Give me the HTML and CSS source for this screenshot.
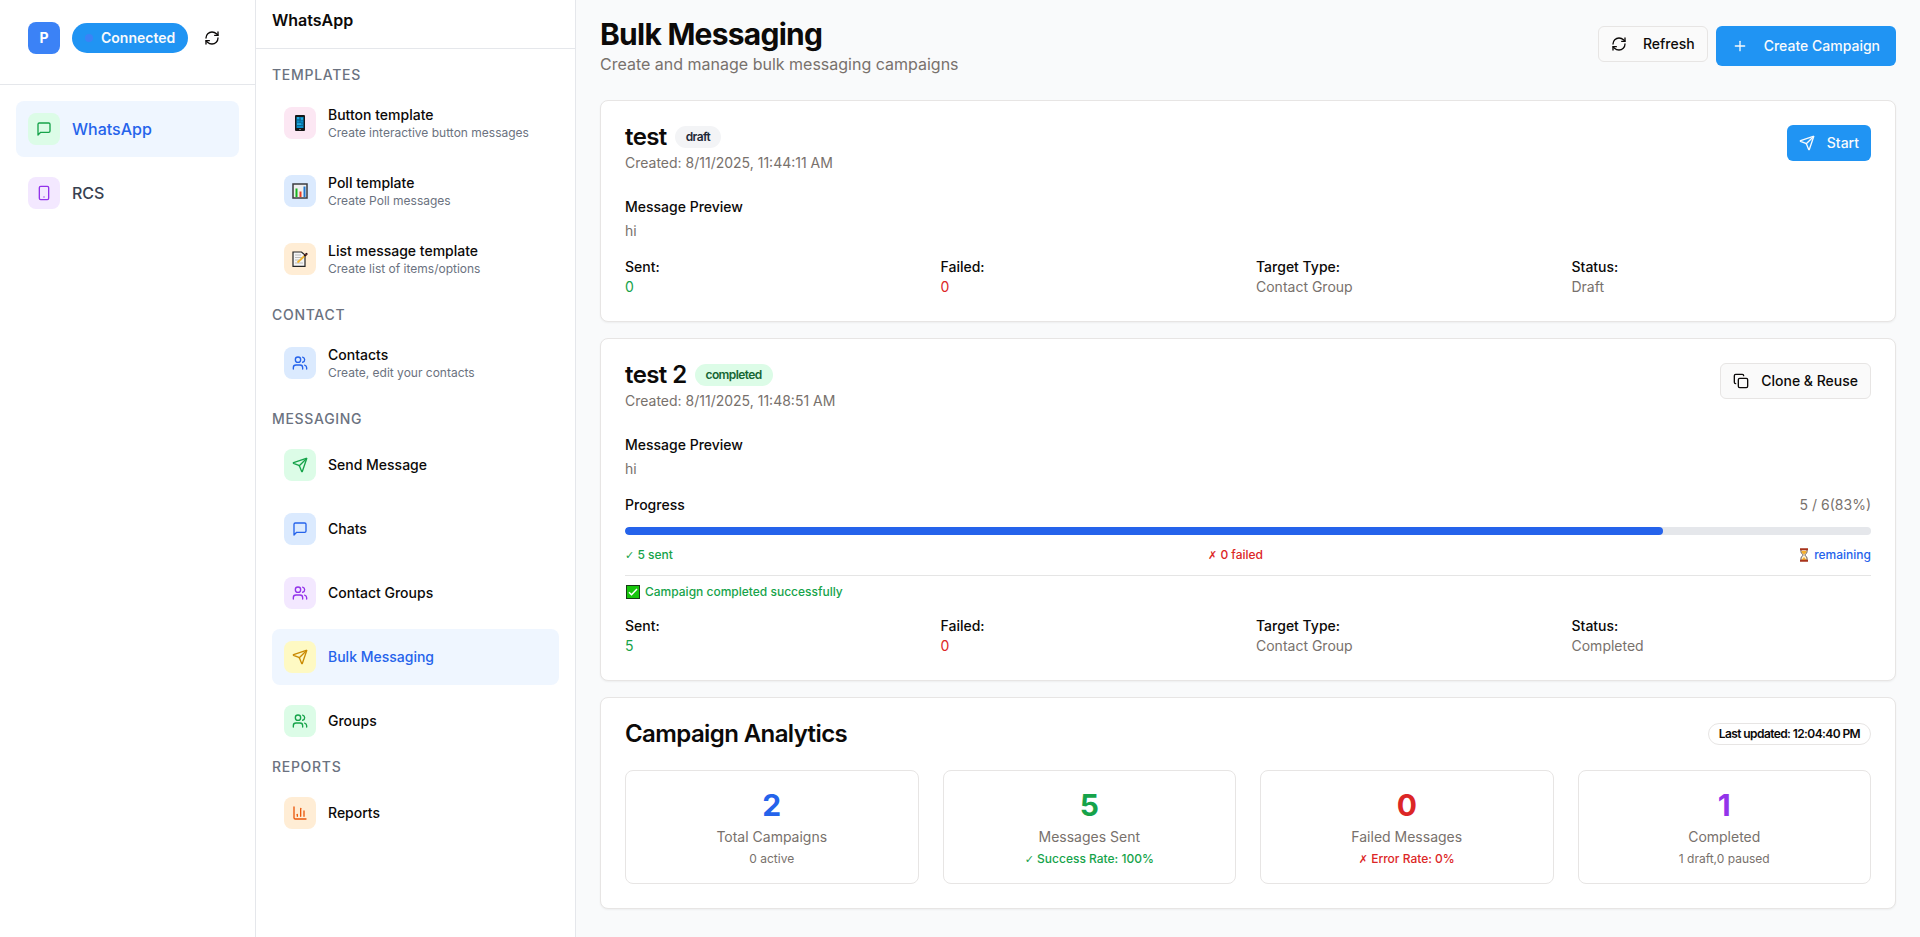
FILE: index.html
```
<!DOCTYPE html>
<html lang="en">
<head>
<meta charset="utf-8">
<meta name="viewport" content="width=device-width, initial-scale=1">
<title>Bulk Messaging</title>
<link rel="stylesheet" href="styles.css">
</head>
<body>
<svg class="sprite" aria-hidden="true">
  <symbol id="i-refresh" viewBox="0 0 24 24"><path d="M3 12a9 9 0 0 1 9-9 9.75 9.75 0 0 1 6.74 2.74L21 8"/><path d="M21 3v5h-5"/><path d="M21 12a9 9 0 0 1-9 9 9.75 9.75 0 0 1-6.74-2.74L3 16"/><path d="M8 16H3v5"/></symbol>
  <symbol id="i-chat" viewBox="0 0 24 24"><path d="M21 15a2 2 0 0 1-2 2H7l-4 4V5a2 2 0 0 1 2-2h14a2 2 0 0 1 2 2z"/></symbol>
  <symbol id="i-phone" viewBox="0 0 24 24"><rect width="14" height="20" x="5" y="2" rx="2"/><path d="M12 18h.01"/></symbol>
  <symbol id="i-users" viewBox="0 0 24 24"><path d="M16 21v-2a4 4 0 0 0-4-4H6a4 4 0 0 0-4 4v2"/><circle cx="9" cy="7" r="4"/><path d="M22 21v-2a4 4 0 0 0-3-3.87"/><path d="M16 3.13a4 4 0 0 1 0 7.75"/></symbol>
  <symbol id="i-send" viewBox="0 0 24 24"><path d="M14.536 21.686a.5.5 0 0 0 .937-.024l6.5-19a.496.496 0 0 0-.635-.635l-19 6.5a.5.5 0 0 0-.024.937l7.93 3.18a2 2 0 0 1 1.112 1.11z"/><path d="m21.854 2.147-10.94 10.939"/></symbol>
  <symbol id="i-chart" viewBox="0 0 24 24"><path d="M3 3v16a2 2 0 0 0 2 2h16"/><path d="M18 17V9"/><path d="M13 17V5"/><path d="M8 17v-3"/></symbol>
  <symbol id="i-plus" viewBox="0 0 24 24"><path d="M5 12h14"/><path d="M12 5v14"/></symbol>
  <symbol id="i-copy" viewBox="0 0 24 24"><rect width="14" height="14" x="8" y="8" rx="2"/><path d="M4 16c-1.1 0-2-.9-2-2V4c0-1.1.9-2 2-2h10c1.1 0 2 .9 2 2"/></symbol>
</svg>
<div class="app">
  <aside class="rail">
    <div class="rail-head">
      <span class="avatar">P</span>
      <span class="status"><span class="status-dot"></span>Connected</span>
      <button class="icon-button" type="button" aria-label="Refresh connection"><svg class="icon"><use href="#i-refresh"/></svg></button>
    </div>
    <nav class="rail-nav" aria-label="Channels">
      <a class="item item-large active" href="#whatsapp"><span class="tile green"><svg class="icon"><use href="#i-chat"/></svg></span>WhatsApp</a>
      <a class="item item-large" href="#rcs"><span class="tile purple"><svg class="icon"><use href="#i-phone"/></svg></span>RCS</a>
    </nav>
  </aside>

  <aside class="menu">
    <h2 class="menu-head">WhatsApp</h2>
    <nav class="menu-nav" aria-label="WhatsApp">
      <section class="group">
        <h3 class="group-title">Templates</h3>
        <a class="item" href="#button-template"><span class="tile pink">
          <svg class="icon emoji" viewBox="0 0 16 16"><rect x="3" width="10" height="16" rx="1" fill="#171717"/><rect x="4.500" y="2" width="7" height="11" fill="#078dc8"/><path d="M8 2v6M4.500 5h7M4.500 8h7M4.500 10.500h7" stroke="#12587c" stroke-width=".7"/><path d="M5 3h2M9 4h2M5 9h4" stroke="#39c7f3"/><path d="M7 14.500h2" stroke="#777"/></svg></span>
          <span class="item-text"><span>Button template</span><small class="hint">Create interactive button messages</small></span></a>
        <a class="item" href="#poll-template"><span class="tile blue">
          <svg class="icon emoji" viewBox="0 0 16 16"><rect x="1" y="1" width="14" height="14" fill="#eee" stroke="#3c3c40" stroke-width="1.500"/><path d="M4.500 5.500V14" stroke="#16b51f" stroke-width="2"/><path d="M8.500 8.500V14" stroke="#ee3b20" stroke-width="2"/><path d="M12.500 3.500V14" stroke="#2177cf" stroke-width="2"/></svg></span>
          <span class="item-text"><span>Poll template</span><small class="hint">Create Poll messages</small></span></a>
        <a class="item" href="#list-template"><span class="tile orange">
          <svg class="icon emoji" viewBox="0 0 16 16"><path d="M1 1h8.500L13 4v11.300H1z" fill="#f5f5f5" stroke="#242424" stroke-width="1.200"/><path d="M3 4h6M3 6.500h7M3 9h4M3 12h8" stroke="#bbb"/><path d="m5.500 11.500 7.500-7" stroke="#f2b632" stroke-width="1.800"/><path d="m13 4.500 1.500-1.500" stroke="#2b1717" stroke-width="2.200" stroke-linecap="round"/><path d="m13.700 3.800.6-.6" stroke="#b5463c" stroke-width="1.200"/></svg></span>
          <span class="item-text"><span>List message template</span><small class="hint">Create list of items/options</small></span></a>
      </section>
      <section class="group">
        <h3 class="group-title">Contact</h3>
        <a class="item" href="#contacts"><span class="tile blue"><svg class="icon"><use href="#i-users"/></svg></span>
          <span class="item-text"><span>Contacts</span><small class="hint">Create, edit your contacts</small></span></a>
      </section>
      <section class="group">
        <h3 class="group-title">Messaging</h3>
        <a class="item" href="#send"><span class="tile green"><svg class="icon"><use href="#i-send"/></svg></span>Send Message</a>
        <a class="item" href="#chats"><span class="tile blue"><svg class="icon"><use href="#i-chat"/></svg></span>Chats</a>
        <a class="item" href="#contact-groups"><span class="tile purple"><svg class="icon"><use href="#i-users"/></svg></span>Contact Groups</a>
        <a class="item active" href="#bulk"><span class="tile yellow"><svg class="icon"><use href="#i-send"/></svg></span>Bulk Messaging</a>
        <a class="item" href="#groups"><span class="tile green"><svg class="icon"><use href="#i-users"/></svg></span>Groups</a>
      </section>
      <section class="group group-close">
        <h3 class="group-title">Reports</h3>
        <a class="item" href="#reports"><span class="tile orange"><svg class="icon"><use href="#i-chart"/></svg></span>Reports</a>
      </section>
    </nav>
  </aside>

  <main class="main">
    <header class="page-head">
      <div>
        <h1 class="page-title">Bulk Messaging</h1>
        <p class="page-sub">Create and manage bulk messaging campaigns</p>
      </div>
      <div class="actions">
        <button class="btn btn-outline btn-spaced" type="button"><svg class="icon"><use href="#i-refresh"/></svg>Refresh</button>
        <button class="btn btn-primary btn-spaced btn-tall" type="button"><svg class="icon"><use href="#i-plus"/></svg>Create Campaign</button>
      </div>
    </header>

    <article class="card">
      <div class="card-head">
        <div>
          <div class="title-row"><h2 class="card-title">test</h2><span class="badge badge-draft">draft</span></div>
          <p class="muted created">Created: 8/11/2025, 11:44:11 AM</p>
        </div>
        <button class="btn btn-primary" type="button"><svg class="icon"><use href="#i-send"/></svg>Start</button>
      </div>
      <div class="card-body">
        <div class="preview"><h3 class="label">Message Preview</h3><p class="muted">hi</p></div>
        <dl class="facts">
          <div><dt class="label">Sent:</dt><dd class="text-green">0</dd></div>
          <div><dt class="label">Failed:</dt><dd class="text-red">0</dd></div>
          <div><dt class="label">Target Type:</dt><dd class="muted">Contact Group</dd></div>
          <div><dt class="label">Status:</dt><dd class="muted">Draft</dd></div>
        </dl>
      </div>
    </article>

    <article class="card">
      <div class="card-head">
        <div>
          <div class="title-row"><h2 class="card-title">test 2</h2><span class="badge badge-done">completed</span></div>
          <p class="muted created">Created: 8/11/2025, 11:48:51 AM</p>
        </div>
        <button class="btn btn-outline" type="button"><svg class="icon"><use href="#i-copy"/></svg>Clone &amp; Reuse</button>
      </div>
      <div class="card-body">
        <div class="preview"><h3 class="label">Message Preview</h3><p class="muted">hi</p></div>
        <div class="progress">
          <div class="spread"><span class="label">Progress</span><span class="muted">5 / 6(83%)</span></div>
          <div class="track" role="progressbar" aria-label="Progress" aria-valuemin="0" aria-valuemax="6" aria-valuenow="5"><div class="fill" style="width: 83.33%"></div></div>
          <div class="spread note">
            <span class="text-green"><span class="mark">✓</span> 5 sent</span>
            <span class="text-red"><span class="mark">✗</span> 0 failed</span>
            <span class="text-blue with-emoji"><svg class="hourglass" viewBox="0 0 10 14" aria-hidden="true"><path d="M2 1.500h6v2C8 5.500 6 6 6 7s2 1.500 2 3.500v2H2v-2C2 8.500 4 8 4 7S2 5.500 2 3.500z" fill="#fff3d8" stroke="#5a4a42"/><path d="M2.500 3h5c0 2-1.500 2.500-2.500 3.500C4 5.500 2.500 5 2.500 3zM5 9l2.500 3h-5z" fill="#f6b02c"/><path d="M1 1.200h8M1 12.800h8" stroke="#a8341c" stroke-width="2"/></svg>remaining</span>
          </div>
          <p class="done note text-green with-emoji"><svg class="check" viewBox="0 0 14 14" aria-hidden="true"><rect x=".5" y=".5" width="13" height="13" fill="#16c60c" stroke="#173b16"/><path d="m3 7.300 2.500 2.500L11 4" fill="none" stroke="#fff" stroke-width="1.500"/></svg>Campaign completed successfully</p>
        </div>
        <dl class="facts">
          <div><dt class="label">Sent:</dt><dd class="text-green">5</dd></div>
          <div><dt class="label">Failed:</dt><dd class="text-red">0</dd></div>
          <div><dt class="label">Target Type:</dt><dd class="muted">Contact Group</dd></div>
          <div><dt class="label">Status:</dt><dd class="muted">Completed</dd></div>
        </dl>
      </div>
    </article>

    <section class="card">
      <div class="spread">
        <h2 class="card-title">Campaign Analytics</h2>
        <span class="badge badge-outline">Last updated: 12:04:40 PM</span>
      </div>
      <div class="stats">
        <div class="stat"><strong class="number text-blue">2</strong><span class="muted">Total Campaigns</span><span class="muted stat-note">0 active</span></div>
        <div class="stat"><strong class="number text-green">5</strong><span class="muted">Messages Sent</span><span class="note text-green"><span class="mark">✓</span> Success Rate: 100%</span></div>
        <div class="stat"><strong class="number text-red">0</strong><span class="muted">Failed Messages</span><span class="note text-red"><span class="mark">✗</span> Error Rate: 0%</span></div>
        <div class="stat"><strong class="number text-purple">1</strong><span class="muted">Completed</span><span class="muted stat-note">1 draft,0 paused</span></div>
      </div>
    </section>
  </main>
</div>
</body>
</html>
```

FILE: styles.css
```
*, *::before, *::after { box-sizing: border-box; }
body, h1, h2, h3, p, dl, dd { margin: 0; }
body {
  font-family: Inter, "Liberation Sans", sans-serif;
  font-size: 14px;
  line-height: 20px;
  color: #0c0a09;
  background: #f9fafb;
}
a { color: inherit; text-decoration: none; }
button { font: inherit; color: inherit; cursor: pointer; }

.sprite { display: none; }
.icon {
  width: 16px;
  height: 16px;
  flex: none;
  fill: none;
  stroke: currentColor;
  stroke-width: 2;
  stroke-linecap: round;
  stroke-linejoin: round;
}
.emoji { stroke: none; stroke-width: 1; stroke-linecap: butt; stroke-linejoin: miter; }

.app { display: flex; min-height: 100vh; }

/* Channel rail */
.rail { flex: 0 0 256px; background: #fff; border-right: 1px solid #e5e7eb; }
.rail-head {
  display: flex;
  align-items: center;
  gap: 12px;
  padding: 22px 28px 30px;
  border-bottom: 1px solid #e5e7eb;
}
.avatar {
  display: grid;
  place-items: center;
  width: 32px;
  height: 32px;
  border-radius: 8px;
  background: #3b82f6;
  color: #fff;
  font-weight: 700;
}
.status {
  display: flex;
  align-items: center;
  gap: 8px;
  padding: 5px 13px;
  border-radius: 999px;
  background: #2094f3;
  color: #f8fafc;
  font-weight: 600;
}
.status-dot { width: 8px; height: 8px; border-radius: 50%; background: #3b82f6; }
.icon-button { display: grid; padding: 4px; border: 0; background: none; }
.rail-nav { display: grid; gap: 8px; padding: 16px; }

/* Navigation items */
.item {
  display: flex;
  align-items: center;
  gap: 12px;
  padding: 12px;
  border-radius: 8px;
  font-weight: 500;
}
.item-large { font-size: 16px; color: #374151; }
.item.active { background: #eff6ff; color: #2563eb; }
.item-text { display: grid; }
.hint { font-size: 12px; line-height: 16px; font-weight: 400; color: #6b7280; }
.tile {
  display: grid;
  place-items: center;
  width: 32px;
  height: 32px;
  border-radius: 8px;
}
.green { background: #dcfce7; color: #16a34a; }
.purple { background: #f3e8ff; color: #9333ea; }
.blue { background: #dbeafe; color: #2563eb; }
.pink { background: #fce7f3; }
.orange { background: #ffedd5; color: #ea580c; }
.yellow { background: #fef9c3; color: #ca8a04; }

/* Section menu */
.menu { flex: 0 0 320px; background: #fff; border-right: 1px solid #e5e7eb; }
.menu-head {
  padding: 8px 16px 16px;
  border-bottom: 1px solid #e5e7eb;
  font-size: 16px;
  line-height: 24px;
  font-weight: 600;
}
.menu-nav { display: grid; gap: 16px; padding: 16px; }
.group { display: grid; gap: 8px; }
.group-close { margin-top: -8px; }
.group-title {
  font-size: 14px;
  font-weight: 500;
  letter-spacing: 0.05em;
  text-transform: uppercase;
  color: #6b7280;
}

/* Page */
.main { flex: 1; min-width: 0; padding: 16px 24px 28px; }
.page-head {
  display: flex;
  align-items: center;
  justify-content: space-between;
  margin-bottom: 24px;
}
.page-title { font-size: 30px; line-height: 36px; font-weight: 700; letter-spacing: -0.025em; }
.page-sub { font-size: 16px; line-height: 24px; color: #78716c; }
.actions { display: flex; align-items: flex-start; gap: 8px; }

.btn {
  display: inline-flex;
  align-items: center;
  gap: 12px;
  height: 36px;
  padding: 0 12px;
  border: 0;
  border-radius: 6px;
  font-weight: 500;
  white-space: nowrap;
}
.btn-outline { border: 1px solid #e7e5e4; background: #fafafa; }
.btn-primary { background: #2094f3; color: #f8fafc; }
.btn-spaced { gap: 16px; }
.btn-tall { height: 40px; padding: 0 16px; }

.card {
  padding: 24px;
  border: 1px solid #e7e5e4;
  border-radius: 8px;
  background: #fff;
  box-shadow: 0 1px 2px rgba(0, 0, 0, 0.05);
}
.card + .card { margin-top: 16px; }
.card-head { display: flex; align-items: flex-start; justify-content: space-between; margin-bottom: 24px; }
.title-row { display: flex; align-items: center; gap: 8px; }
.card-title { font-size: 24px; line-height: 24px; font-weight: 600; letter-spacing: -0.025em; }
.created { margin-top: 4px; }
.card-body { display: grid; gap: 16px; }
.preview { display: grid; gap: 4px; }
.label { font-size: 14px; font-weight: 500; }
.muted { color: #78716c; }

.badge {
  padding: 2px 10px;
  border: 1px solid transparent;
  border-radius: 999px;
  font-size: 12px;
  line-height: 16px;
  font-weight: 600;
  letter-spacing: -0.05em;
}
.badge-draft { background: #f3f4f6; color: #1f2937; }
.badge-done { background: #dcfce7; color: #166534; }
.badge-outline { border-color: #e7e5e4; }

.facts { display: grid; grid-template-columns: repeat(4, 1fr); gap: 16px; }
.spread { display: flex; align-items: center; justify-content: space-between; }
.progress { display: grid; gap: 12px; }
.track { height: 8px; border-radius: 4px; background: #e5e7eb; overflow: hidden; }
.fill { height: 100%; border-radius: 4px; background: #2563eb; }
.note { font-size: 12px; line-height: 16px; font-weight: 500; }
.mark { font-family: "DejaVu Sans", sans-serif; font-size: 11px; line-height: 1; font-weight: 400; }
.with-emoji { display: flex; align-items: center; gap: 4px; }
.done { padding-top: 8px; border-top: 1px solid #e5e5e5; }
.hourglass { width: 12px; height: 14px; }
.check { width: 16px; height: 14px; }

.stats { display: grid; grid-template-columns: repeat(4, 1fr); gap: 24px; margin-top: 24px; }
.stat {
  display: grid;
  gap: 4px;
  justify-items: center;
  padding: 16px;
  border: 1px solid #e7e5e4;
  border-radius: 8px;
}
.number { font-size: 30px; line-height: 36px; font-weight: 700; }
.stat-note { font-size: 12px; line-height: 16px; }
.text-green { color: #16a34a; }
.text-red { color: #dc2626; }
.text-blue { color: #2563eb; }
.text-purple { color: #9333ea; }
```
